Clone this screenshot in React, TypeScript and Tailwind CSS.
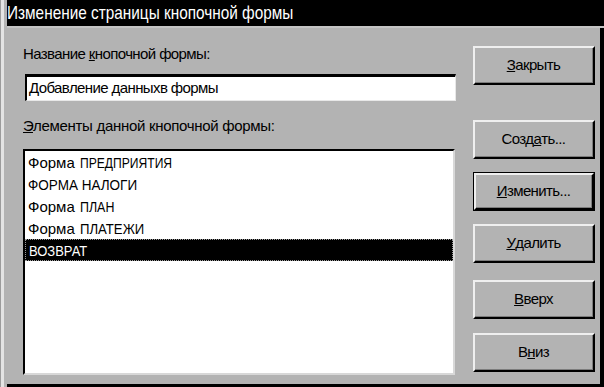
import React, { useLayoutEffect, useRef, useState } from "react";

const font = { fontFamily: '"Liberation Sans", Arial, sans-serif' };

function Fit({ text, end }: { text: string; end: number }) {
  const ref = useRef<HTMLSpanElement>(null);
  const [s, setS] = useState(1);
  useLayoutEffect(() => {
    const el = ref.current;
    if (el) {
      const nw = el.offsetWidth;
      if (nw > 0) setS((end - el.offsetLeft) / nw);
    }
  }, [end]);
  return (
    <span ref={ref} className="inline-block origin-left whitespace-nowrap" style={{ transform: `scaleX(${s})` }}>
      {text}
    </span>
  );
}

function Btn({ children, focused = false, className = "" }: { children: React.ReactNode; focused?: boolean; className?: string }) {
  return (
    <div className={`h-[39px] w-[122px] ${focused ? "border border-black" : ""} ${className}`}>
      <div className="h-full w-full border-t-2 border-l-2 border-b-2 border-r-2 border-t-[#efefef] border-l-[#efefef] border-b-black border-r-black">
        <div className="h-full w-full border-b border-r border-[#7c7c7c] flex items-center justify-center text-[15px] tracking-[-0.6px] text-black">
          {children}
        </div>
      </div>
    </div>
  );
}

export default function App() {
  const items = [
    { p: "Форма", c: "ПРЕДПРИЯТИЯ", e: 147 },
    { p: "", c: "ФОРМА НАЛОГИ", e: 112 },
    { p: "Форма", c: "ПЛАН", e: 89 },
    { p: "Форма", c: "ПЛАТЕЖИ", e: 119 },
    { p: "", c: "ВОЗВРАТ", e: 61 },
  ];
  return (
    <div className="w-[604px] h-[387px] flex bg-[#b3b3b3] overflow-hidden" style={font}>
      <div className="w-[7px] flex shrink-0">
        <div className="w-[1px] bg-[#9c9c9c]" />
        <div className="w-[3px] bg-[#e4e4e4]" />
        <div className="flex-1 bg-[#b3b3b3]" />
      </div>
      <div className="flex-1 flex flex-col">
        <div className="relative h-[26px] bg-black text-white text-[19px] leading-[26px] whitespace-nowrap">
          <Fit text="Изменение страницы кнопочной формы" end={286} />
        </div>
        <div className="h-[2px] bg-[#c4c4c4]" />
        <div className="flex-1 flex border-r-4 border-b-[3px] border-black">
          <div className="w-[449px] pl-[16px] pt-[17px] flex flex-col">
            <div className="text-[15px] leading-[18px] tracking-[-0.6px] text-black">
              Название <span className="underline">к</span>нопочной формы:
            </div>
            <div className="mt-[11px] ml-[2px] h-[27px] w-[431px] bg-white border-t-[3px] border-l-2 border-b border-r border-t-black border-l-black border-b-[#e8e8e8] border-r-[#e8e8e8] flex items-center pl-[2px] text-[15px] tracking-[-0.6px] text-black">
              Добавление данныхв формы
            </div>
            <div className="mt-[16px] text-[15px] leading-[18px] tracking-[-0.3px] text-black">
              <span className="underline">Э</span>лементы данной кнопочной формы:
            </div>
            <div className="mt-[14px] h-[226px] w-[432px] bg-white border-t-2 border-l-2 border-b-2 border-r-2 border-t-black border-l-black border-b-[#d8d8d8] border-r-[#d8d8d8] flex flex-col">
              {items.map((it, i) => (
                <div
                  key={it.c}
                  className={`relative h-[22px] pl-[3px] flex items-center text-[15px] pt-[2px] whitespace-nowrap ${i === 4 ? "bg-black text-white border border-dotted border-[#9a9a9a]" : "text-black"}`}
                >
                  {it.p && <span className="mr-[5px]">{it.p}</span>}
                  <Fit text={it.c} end={it.e} />
                </div>
              ))}
            </div>
          </div>
          <div className="ml-[17px] pt-[18px] flex flex-col">
            <Btn><span className="underline">З</span>акрыть</Btn>
            <Btn className="mt-[35px]">Созд<span className="underline">а</span>ть...</Btn>
            <Btn focused className="mt-[13px]"><span className="underline">И</span>зменить...</Btn>
            <Btn className="mt-[13px]"><span className="underline">У</span>далить</Btn>
            <Btn className="mt-[17px]"><span className="underline">В</span>верх</Btn>
            <Btn className="mt-[14px]">В<span className="underline">н</span>из</Btn>
          </div>
        </div>
      </div>
    </div>
  );
}
